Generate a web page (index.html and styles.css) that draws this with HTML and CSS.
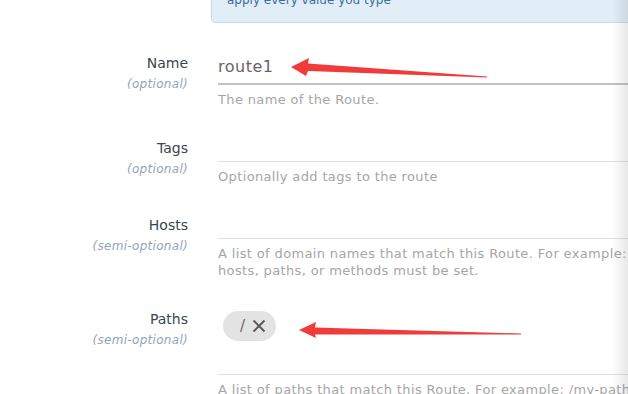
FILE: index.html
```html
<!DOCTYPE html>
<html lang="en">
<head>
  <meta charset="UTF-8" />
  <title>Create Route</title>
  <link rel="stylesheet" href="styles.css">
</head>
<body>
  <div class="page">
    <div class="notice">apply every value you type</div>

    <form class="route-form">

      <!-- Name -->
      <div class="row">
        <div class="label">
          <div class="label-name">Name</div>
          <div class="label-hint">(optional)</div>
        </div>
        <div class="field">
          <input class="input input-filled" type="text" value="route1">
          <p class="help">The name of the Route.</p>
        </div>
      </div>

      <!-- Tags -->
      <div class="row">
        <div class="label">
          <div class="label-name">Tags</div>
          <div class="label-hint">(optional)</div>
        </div>
        <div class="field">
          <input class="input" type="text">
          <p class="help">Optionally add tags to the route</p>
        </div>
      </div>

      <!-- Hosts -->
      <div class="row">
        <div class="label">
          <div class="label-name">Hosts</div>
          <div class="label-hint">(semi-optional)</div>
        </div>
        <div class="field">
          <input class="input" type="text">
          <p class="help">A list of domain names that match this Route. For example:<br>hosts, paths, or methods must be set.</p>
        </div>
      </div>

      <!-- Paths -->
      <div class="row">
        <div class="label">
          <div class="label-name">Paths</div>
          <div class="label-hint">(semi-optional)</div>
        </div>
        <div class="field">
          <div class="chips">
            <span class="chip">/
              <svg class="chip-close" width="14" height="14" viewBox="0 0 14 14">
                <path d="M1.5 1.5 L12.5 12.5 M12.5 1.5 L1.5 12.5" stroke="#555" stroke-width="1.8" fill="none"/>
              </svg>
            </span>
            <input class="input input-chips" type="text">
          </div>
          <p class="help">A list of paths that match this Route. For example: /my-path</p>
        </div>
      </div>
    </form>

    <div class="edge-shadow"></div>

    <!-- annotation arrows -->
    <svg class="arrows" width="628" height="394" viewBox="0 0 628 394">
      <polygon fill="#f03b3b" points="291,67 309,58 308,63.5 487,76.5 487,77.5 308,71 306,76"/>
      <polygon fill="#f03b3b" points="299,330 316,322 315,327.5 521,333.5 521,334.5 315,334.5 316,338"/>
    </svg>
  </div>
</body>
</html>
```

FILE: styles.css
```css
body {
  margin: 0;
  font-family: "DejaVu Sans", sans-serif;
  background: white;
  overflow: hidden;
}
.page {
  position: relative;
  width: 628px;
  height: 394px;
  overflow: hidden;
}
.notice {
  margin: -22px -30px 0 211px;
  padding: 12px 15px 13px;
  line-height: 18px;
  font-size: 12px;
  color: #3c6e9c;
  background: #e1edf7;
  border: 1px solid #c6dbeb;
  border-radius: 4px;
  white-space: nowrap;
}
.route-form {
  margin-top: 30px;
}
.row {
  display: grid;
  grid-template-columns: 188px 560px;
  column-gap: 30px;
  margin-bottom: 30px;
}
.label {
  text-align: right;
}
.label-name {
  font-size: 14px;
  line-height: 20px;
  color: #37474f;
}
.label-hint {
  font-size: 12px;
  line-height: 22px;
  font-style: italic;
  letter-spacing: 0.3px;
  color: #91a6b5;
}
.field {
  min-width: 0;
}
.input {
  display: block;
  box-sizing: border-box;
  width: 100%;
  height: 24px;
  padding: 0;
  border: none;
  border-bottom: 1px solid #e2e2e2;
  font-family: inherit;
  font-size: 16px;
  letter-spacing: 0.5px;
  color: #666;
  outline: none;
  background: transparent;
}
.input-filled {
  height: 32px;
  padding-bottom: 4px;
  border-bottom: 2px solid #c2c2c2;
}
.chips {
  padding-top: 2px;
  border-bottom: 1px solid #e2e2e2;
}
.input-chips {
  height: 33px;
  border-bottom: none;
}
.chip {
  display: inline-flex;
  align-items: center;
  gap: 7px;
  box-sizing: border-box;
  height: 30px;
  margin-left: 5px;
  padding: 0 10px 0 17px;
  border-radius: 15px;
  background: #e3e3e3;
  font-size: 15px;
  color: #666;
}
.help {
  margin: 6px 0 0;
  font-size: 13px;
  line-height: 17px;
  letter-spacing: 0.36px;
  color: #a6a6a6;
  white-space: nowrap;
}
.edge-shadow {
  position: absolute;
  top: 0;
  right: 0;
  bottom: 0;
  width: 16px;
  background: linear-gradient(to right, rgba(0,0,0,0), rgba(0,0,0,0.09));
}
.arrows {
  position: absolute;
  top: 0;
  left: 0;
  pointer-events: none;
}
```
